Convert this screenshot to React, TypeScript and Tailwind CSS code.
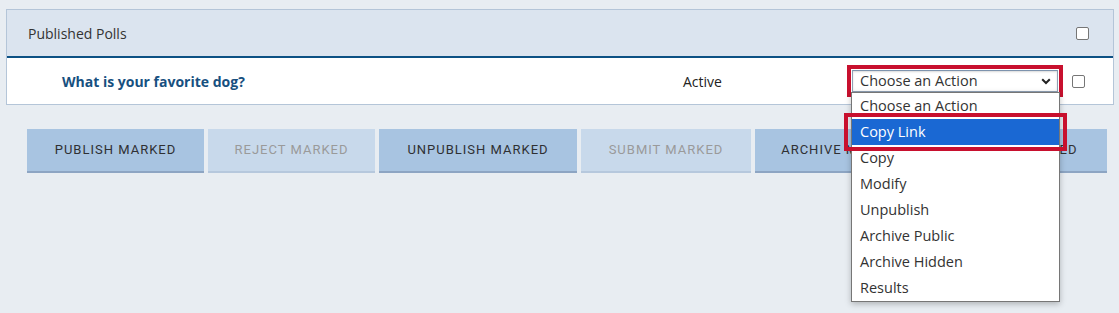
import React from "react";

const buttons = [
  { label: "PUBLISH MARKED", w: "w-[177px]", disabled: false },
  { label: "REJECT MARKED", w: "w-[167px]", disabled: true },
  { label: "UNPUBLISH MARKED", w: "w-[198px]", disabled: false },
  { label: "SUBMIT MARKED", w: "w-[170px]", disabled: true },
  { label: "ARCHIVE MARKED", w: "w-[175px]", disabled: false },
  { label: "DELETE MARKED", w: "w-[173px]", disabled: false },
];

const actions = [
  "Choose an Action",
  "Copy Link",
  "Copy",
  "Modify",
  "Unpublish",
  "Archive Public",
  "Archive Hidden",
  "Results",
];

const Checkbox = () => (
  <span className="block w-[13px] h-[13px] bg-white border border-[#767676] rounded-[2px]" />
);

const ActionSelect = () => (
  <div className="relative">
    <div className="border-4 border-[#c8102e] p-px">
      <div className="w-[206px] h-[22px] bg-white border border-[#8fa0b4] border-t-[#7d93ad] flex items-center justify-between pl-[7px] pr-[6px] shadow-[inset_0_1px_2px_rgba(0,0,0,0.15)]">
        <span className="text-[14.5px] text-[#333]">Choose an Action</span>
        <svg width="10" height="7" viewBox="0 0 10 7" className="mt-px">
          <path d="M1.2 1.2 5 5 8.8 1.2" fill="none" stroke="#222" strokeWidth="2" />
        </svg>
      </div>
    </div>
    {/* open native option list */}
    <div className="absolute left-[4px] top-[27px] w-[209px] bg-white border border-[#767676] shadow-[0_2px_6px_rgba(0,0,0,0.25)] z-10">
      {actions.map((a, i) => (
        <div
          key={a}
          className={`h-[26px] flex items-center pl-[8px] text-[14.5px] ${
            i === 1 ? "bg-[#1a68d3] text-white" : "text-[#333]"
          }`}
        >
          {a}
        </div>
      ))}
      <div className="absolute left-[-8px] top-[20px] w-[223px] h-[38px] border-4 border-[#c8102e]" />
    </div>
  </div>
);

export default function App() {
  return (
    <div
      className="min-h-[313px] bg-[#e8edf2] pt-[9px] px-[5px] pb-[10px]"
      style={{ fontFamily: '"Open Sans", "Noto Sans", sans-serif' }}
    >
      <div className="ml-px w-[1108px] border border-[#b4c5d8] bg-white">
        <div className="h-[48px] bg-[#dbe4ef] border-b-2 border-[#0c5184] flex items-center justify-between pl-[21px] pr-[24px]">
          <span className="text-[14px] text-[#333]">Published Polls</span>
          <Checkbox />
        </div>
        <div className="h-[46px] flex items-center">
          <span className="ml-[55px] w-[621px] text-[14px] font-bold text-[#17507f]">
            What is your favorite dog?
          </span>
          <span className="w-[164px] text-[14px] text-[#222]">Active</span>
          <ActionSelect />
          <div className="ml-[9px]">
            <Checkbox />
          </div>
        </div>
      </div>

      <div className="mt-[24px] ml-[22px] flex gap-[4px]">
        {buttons.map((b) => (
          <button
            key={b.label}
            className={`${b.w} h-[44px] border-b-2 flex items-center justify-center text-[13px] tracking-[1px] ${
              b.disabled
                ? "bg-[#c8d9eb] border-[#b6c8dd] text-[#9a9a9a]"
                : "bg-[#a8c4e1] border-[#8da5c3] text-[#2f3033]"
            }`}
            style={{ fontFamily: "Roboto, sans-serif" }}
          >
            {b.label}
          </button>
        ))}
      </div>
    </div>
  );
}
